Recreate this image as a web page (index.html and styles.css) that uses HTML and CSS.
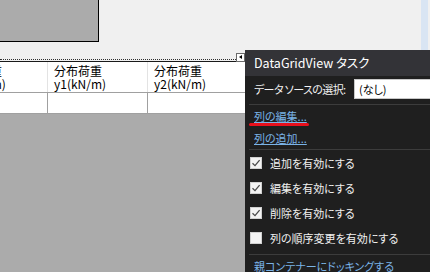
FILE: index.html
```html
<!DOCTYPE html>
<html lang="ja">
<head>
    <meta charset="UTF-8">
    <title>DataGridView タスク</title>
    <link rel="stylesheet" href="styles.css">
</head>
<body>
<div class="designer">
    <div class="surface">
        <div class="form-box"></div>
        <div class="strip"></div>
    </div>
    <div class="grid">
        <div class="row head">
            <div class="cell">分布荷重<br>x2(kN/m)</div>
            <div class="cell">分布荷重<br>y1(kN/m)</div>
            <div class="cell">分布荷重<br>y2(kN/m)</div>
            <div class="cell"></div>
        </div>
        <div class="row data">
            <div class="cell"></div>
            <div class="cell"></div>
            <div class="cell"></div>
            <div class="cell"></div>
        </div>
    </div>
    <div class="backdrop"></div>

    <span class="smart-tag"></span>

    <div class="tasks">
        <div class="tasks-title">DataGridView タスク</div>
        <div class="tasks-body">
            <div class="source">
                <span class="source-label">データ ソースの選択:</span>
                <span class="combo">(なし)</span>
            </div>
            <div class="sep"></div>
            <div class="link-row marked"><a href="#">列の編集...</a></div>
            <div class="link-row"><a href="#">列の追加...</a></div>
            <div class="sep"></div>
            <label class="check"><span class="box on"></span>追加を有効にする</label>
            <label class="check"><span class="box on"></span>編集を有効にする</label>
            <label class="check"><span class="box on"></span>削除を有効にする</label>
            <label class="check"><span class="box"></span>列の順序変更を有効にする</label>
            <div class="sep last"></div>
            <div class="link-row"><a href="#">親コンテナーにドッキングする</a></div>
        </div>
    </div>
</div>
</body>
</html>
```

FILE: styles.css
```css
body {
    margin: 0;
    width: 430px;
    height: 272px;
    overflow: hidden;
    font-family: "Noto Sans CJK JP", "Noto Sans", sans-serif;
}
.designer {
    position: relative;
    display: flex;
    flex-direction: column;
    height: 272px;
    background-color: #f0f0f0;
}
.surface {
    display: flex;
    height: 59px;
    border-bottom: 1px dotted #303030;
}
.form-box {
    width: 98px;
    height: 41px;
    background-color: #ababab;
    border-right: 1px solid #000;
    border-bottom: 1px solid #000;
}
.strip {
    width: 7px;
    height: 52px;
    margin-left: auto;
    margin-right: 2px;
    background-color: #d9e5f3;
}
.grid {
    margin-top: 1px;
    border-top: 1px solid #1a1a1a;
    background-color: #fff;
}
.row {
    display: flex;
    margin-left: -52px;
    border-bottom: 1px solid #a0a0a0;
}
.cell {
    box-sizing: border-box;
    flex: 0 0 100px;
    border-right: 1px solid #a0a0a0;
}
.head .cell {
    height: 30px;
    padding: 3px 0 0 6px;
    font-size: 12px;
    line-height: 12.5px;
    color: #000;
    border-right-color: #e3e3e3;
    white-space: nowrap;
}
.data .cell {
    height: 20px;
}
.backdrop {
    flex: 1;
    background-color: #ababab;
}
.smart-tag {
    position: absolute;
    left: 236px;
    top: 53px;
    width: 7px;
    height: 7px;
    background-color: #fff;
    border: 1px solid #6a6a6a;
}
.smart-tag::after {
    content: "";
    position: absolute;
    left: 2px;
    top: 1px;
    border-top: 2.5px solid transparent;
    border-bottom: 2.5px solid transparent;
    border-right: 3px solid #000;
}
.tasks {
    position: absolute;
    left: 245px;
    top: 50px;
    width: 185px;
    height: 222px;
    background-color: #1f1f1f;
    color: #f1f1f1;
    font-size: 11px;
    font-feature-settings: "palt";
}
.tasks-title {
    height: 26px;
    line-height: 26px;
    padding-left: 9px;
    background-color: #333337;
    font-size: 12.5px;
    color: #fff;
}
.tasks-body {
    display: flex;
    flex-direction: column;
}
.source {
    display: flex;
    align-items: center;
    height: 20px;
    margin-top: 3px;
    padding-left: 9px;
}
.source-label {
    letter-spacing: -0.6px;
}
.combo {
    box-sizing: border-box;
    height: 20px;
    line-height: 18px;
    margin-left: auto;
    width: 76px;
    padding-left: 4px;
    background-color: #fff;
    border: 1px solid #c8c8c8;
    border-right: none;
    color: #000;
}
.sep {
    height: 1px;
    margin: 5px 0 0 4px;
    background-color: #3c3c3c;
}
.sep.last {
    margin-top: 4px;
}
.link-row {
    position: relative;
    height: 22px;
    line-height: 22px;
    padding-left: 9px;
}
.link-row a {
    color: #7ab3e6;
}
.marked::after {
    content: "";
    position: absolute;
    left: 4px;
    top: 18px;
    width: 60px;
    height: 3px;
    border-radius: 2px;
    background-color: #e8101c;
}
.link-row + .sep {
    margin-top: 0;
}
.check {
    display: flex;
    align-items: center;
    gap: 8px;
    height: 25px;
    padding-left: 5px;
}
.box {
    box-sizing: border-box;
    width: 12px;
    height: 12px;
    background-color: #f3f3f3;
    border: 1px solid #d0d0d0;
}
.box.on {
    background: #f3f3f3 url("data:image/svg+xml;utf8,<svg xmlns='http://www.w3.org/2000/svg' width='10' height='10'><path d='M1.5 5.2 L4 7.6 L8.6 2.2' fill='none' stroke='%234a4a4a' stroke-width='1.3'/></svg>") center no-repeat;
}
```
